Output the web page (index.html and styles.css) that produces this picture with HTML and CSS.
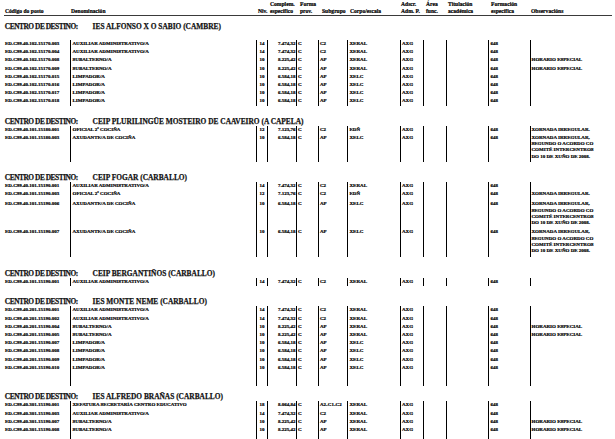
FILE: index.html
```html
<!DOCTYPE html>
<html lang="gl">
<head>
<meta charset="utf-8">
<title>Relación de postos</title>
<link rel="stylesheet" href="styles.css">
</head>
<body>
<div class="page">
  <div class="head">
    <span class="h">Código do posto</span>
    <span class="h">Denominación</span>
    <span class="h">Niv.</span>
    <span class="h">Complem.<br>específico</span>
    <span class="h">Forma<br>prov.</span>
    <span class="h">Subgrupo</span>
    <span class="h">Corpo/escala</span>
    <span class="h">Adscr.<br>Adm. P.</span>
    <span class="h">Área<br>func.</span>
    <span class="h">Titulación<br>académica</span>
    <span class="h">Formación<br>específica</span>
    <span class="h">Observacións</span>
  </div>

  <section class="centro s1">
    <div class="title"><span class="lbl">CENTRO DE DESTINO:</span><span class="name">IES ALFONSO X O SABIO (CAMBRE)</span></div>
    <div class="rows">
      <div class="row"><span class="c cod">ED.C99.40.102.15170.003</span><span class="c den">AUXILIAR ADMINISTRATIVO/A</span><span class="c niv">14</span><span class="c esp">7.474,32</span><span class="c frm">C</span><span class="c sub">C2</span><span class="c cor">XERAL</span><span class="c ads">AXG</span><span class="c are"></span><span class="c tit"></span><span class="c fes">648</span><span class="c obs"></span></div>
      <div class="row"><span class="c cod">ED.C99.40.102.15170.004</span><span class="c den">AUXILIAR ADMINISTRATIVO/A</span><span class="c niv">14</span><span class="c esp">7.474,32</span><span class="c frm">C</span><span class="c sub">C2</span><span class="c cor">XERAL</span><span class="c ads">AXG</span><span class="c are"></span><span class="c tit"></span><span class="c fes">648</span><span class="c obs"></span></div>
      <div class="row"><span class="c cod">ED.C99.40.102.15170.008</span><span class="c den">SUBALTERNO/A</span><span class="c niv">10</span><span class="c esp">8.225,42</span><span class="c frm">C</span><span class="c sub">AP</span><span class="c cor">XERAL</span><span class="c ads">AXG</span><span class="c are"></span><span class="c tit"></span><span class="c fes">648</span><span class="c obs">HORARIO ESPECIAL</span></div>
      <div class="row"><span class="c cod">ED.C99.40.102.15170.009</span><span class="c den">SUBALTERNO/A</span><span class="c niv">10</span><span class="c esp">8.225,42</span><span class="c frm">C</span><span class="c sub">AP</span><span class="c cor">XERAL</span><span class="c ads">AXG</span><span class="c are"></span><span class="c tit"></span><span class="c fes">648</span><span class="c obs">HORARIO ESPECIAL</span></div>
      <div class="row"><span class="c cod">ED.C99.40.102.15170.015</span><span class="c den">LIMPADOR/A</span><span class="c niv">10</span><span class="c esp">6.584,18</span><span class="c frm">C</span><span class="c sub">AP</span><span class="c cor">XELC</span><span class="c ads">AXG</span><span class="c are"></span><span class="c tit"></span><span class="c fes">648</span><span class="c obs"></span></div>
      <div class="row"><span class="c cod">ED.C99.40.102.15170.016</span><span class="c den">LIMPADOR/A</span><span class="c niv">10</span><span class="c esp">6.584,18</span><span class="c frm">C</span><span class="c sub">AP</span><span class="c cor">XELC</span><span class="c ads">AXG</span><span class="c are"></span><span class="c tit"></span><span class="c fes">648</span><span class="c obs"></span></div>
      <div class="row"><span class="c cod">ED.C99.40.102.15170.017</span><span class="c den">LIMPADOR/A</span><span class="c niv">10</span><span class="c esp">6.584,18</span><span class="c frm">C</span><span class="c sub">AP</span><span class="c cor">XELC</span><span class="c ads">AXG</span><span class="c are"></span><span class="c tit"></span><span class="c fes">648</span><span class="c obs"></span></div>
      <div class="row"><span class="c cod">ED.C99.40.102.15170.018</span><span class="c den">LIMPADOR/A</span><span class="c niv">10</span><span class="c esp">6.584,18</span><span class="c frm">C</span><span class="c sub">AP</span><span class="c cor">XELC</span><span class="c ads">AXG</span><span class="c are"></span><span class="c tit"></span><span class="c fes">648</span><span class="c obs"></span></div>
    </div>
  </section>

  <section class="centro s2">
    <div class="title"><span class="lbl">CENTRO DE DESTINO:</span><span class="name">CEIP PLURILINGÜE MOSTEIRO DE CAAVEIRO (A CAPELA)</span></div>
    <div class="rows">
      <div class="row"><span class="c cod">ED.C99.40.101.15180.001</span><span class="c den">OFICIAL 2ª COCIÑA</span><span class="c niv">12</span><span class="c esp">7.123,76</span><span class="c frm">C</span><span class="c sub">C2</span><span class="c cor">EDÑ</span><span class="c ads">AXG</span><span class="c are"></span><span class="c tit"></span><span class="c fes">648</span><span class="c obs">XORNADA IRREGULAR.</span></div>
      <div class="row"><span class="c cod">ED.C99.40.101.15180.003</span><span class="c den">AXUDANTE/A DE COCIÑA</span><span class="c niv">10</span><span class="c esp">6.584,18</span><span class="c frm">C</span><span class="c sub">AP</span><span class="c cor">XELC</span><span class="c ads">AXG</span><span class="c are"></span><span class="c tit"></span><span class="c fes">648</span><span class="c obs multi">XORNADA IRREGULAR,<br>SEGUNDO O ACORDO CO<br>COMITÉ INTERCENTROS<br>DO 10 DE XUÑO DE 2008.</span></div>
    </div>
  </section>

  <section class="centro s3">
    <div class="title"><span class="lbl">CENTRO DE DESTINO:</span><span class="name">CEIP FOGAR (CARBALLO)</span></div>
    <div class="rows">
      <div class="row"><span class="c cod">ED.C99.40.101.15190.001</span><span class="c den">AUXILIAR ADMINISTRATIVO/A</span><span class="c niv">14</span><span class="c esp">7.474,32</span><span class="c frm">C</span><span class="c sub">C2</span><span class="c cor">XERAL</span><span class="c ads">AXG</span><span class="c are"></span><span class="c tit"></span><span class="c fes">648</span><span class="c obs"></span></div>
      <div class="row tall"><span class="c cod">ED.C99.40.101.15190.003</span><span class="c den">OFICIAL 2ª COCIÑA</span><span class="c niv">12</span><span class="c esp">7.123,76</span><span class="c frm">C</span><span class="c sub">C2</span><span class="c cor">EDÑ</span><span class="c ads">AXG</span><span class="c are"></span><span class="c tit"></span><span class="c fes">648</span><span class="c obs">XORNADA IRREGULAR.</span></div>
      <div class="row"><span class="c cod">ED.C99.40.101.15190.006</span><span class="c den">AXUDANTE/A DE COCIÑA</span><span class="c niv">10</span><span class="c esp">6.584,18</span><span class="c frm">C</span><span class="c sub">AP</span><span class="c cor">XELC</span><span class="c ads">AXG</span><span class="c are"></span><span class="c tit"></span><span class="c fes">648</span><span class="c obs multi">XORNADA IRREGULAR,<br>SEGUNDO O ACORDO CO<br>COMITÉ INTERCENTROS<br>DO 10 DE XUÑO DE 2008.</span></div>
      <div class="row"><span class="c cod">ED.C99.40.101.15190.007</span><span class="c den">AXUDANTE/A DE COCIÑA</span><span class="c niv">10</span><span class="c esp">6.584,18</span><span class="c frm">C</span><span class="c sub">AP</span><span class="c cor">XELC</span><span class="c ads">AXG</span><span class="c are"></span><span class="c tit"></span><span class="c fes">648</span><span class="c obs multi">XORNADA IRREGULAR,<br>SEGUNDO O ACORDO CO<br>COMITÉ INTERCENTROS<br>DO 10 DE XUÑO DE 2008.</span></div>
    </div>
  </section>

  <section class="centro s4">
    <div class="title"><span class="lbl">CENTRO DE DESTINO:</span><span class="name">CEIP BERGANTIÑOS (CARBALLO)</span></div>
    <div class="rows">
      <div class="row"><span class="c cod">ED.C99.40.101.15190.001</span><span class="c den">AUXILIAR ADMINISTRATIVO/A</span><span class="c niv">14</span><span class="c esp">7.474,32</span><span class="c frm">C</span><span class="c sub">C2</span><span class="c cor">XERAL</span><span class="c ads">AXG</span><span class="c are"></span><span class="c tit"></span><span class="c fes">648</span><span class="c obs"></span></div>
    </div>
  </section>

  <section class="centro s5">
    <div class="title"><span class="lbl">CENTRO DE DESTINO:</span><span class="name">IES MONTE NEME (CARBALLO)</span></div>
    <div class="rows">
      <div class="row"><span class="c cod">ED.C99.40.201.15190.001</span><span class="c den">AUXILIAR ADMINISTRATIVO/A</span><span class="c niv">14</span><span class="c esp">7.474,32</span><span class="c frm">C</span><span class="c sub">C2</span><span class="c cor">XERAL</span><span class="c ads">AXG</span><span class="c are"></span><span class="c tit"></span><span class="c fes">648</span><span class="c obs"></span></div>
      <div class="row"><span class="c cod">ED.C99.40.201.15190.002</span><span class="c den">AUXILIAR ADMINISTRATIVO/A</span><span class="c niv">14</span><span class="c esp">7.474,32</span><span class="c frm">C</span><span class="c sub">C2</span><span class="c cor">XERAL</span><span class="c ads">AXG</span><span class="c are"></span><span class="c tit"></span><span class="c fes">648</span><span class="c obs"></span></div>
      <div class="row"><span class="c cod">ED.C99.40.201.15190.004</span><span class="c den">SUBALTERNO/A</span><span class="c niv">10</span><span class="c esp">8.225,42</span><span class="c frm">C</span><span class="c sub">AP</span><span class="c cor">XERAL</span><span class="c ads">AXG</span><span class="c are"></span><span class="c tit"></span><span class="c fes">648</span><span class="c obs">HORARIO ESPECIAL</span></div>
      <div class="row"><span class="c cod">ED.C99.40.201.15190.005</span><span class="c den">SUBALTERNO/A</span><span class="c niv">10</span><span class="c esp">8.225,42</span><span class="c frm">C</span><span class="c sub">AP</span><span class="c cor">XERAL</span><span class="c ads">AXG</span><span class="c are"></span><span class="c tit"></span><span class="c fes">648</span><span class="c obs">HORARIO ESPECIAL</span></div>
      <div class="row"><span class="c cod">ED.C99.40.201.15190.007</span><span class="c den">LIMPADOR/A</span><span class="c niv">10</span><span class="c esp">6.584,18</span><span class="c frm">C</span><span class="c sub">AP</span><span class="c cor">XELC</span><span class="c ads">AXG</span><span class="c are"></span><span class="c tit"></span><span class="c fes">648</span><span class="c obs"></span></div>
      <div class="row"><span class="c cod">ED.C99.40.201.15190.008</span><span class="c den">LIMPADOR/A</span><span class="c niv">10</span><span class="c esp">6.584,18</span><span class="c frm">C</span><span class="c sub">AP</span><span class="c cor">XELC</span><span class="c ads">AXG</span><span class="c are"></span><span class="c tit"></span><span class="c fes">648</span><span class="c obs"></span></div>
      <div class="row"><span class="c cod">ED.C99.40.201.15190.009</span><span class="c den">LIMPADOR/A</span><span class="c niv">10</span><span class="c esp">6.584,18</span><span class="c frm">C</span><span class="c sub">AP</span><span class="c cor">XELC</span><span class="c ads">AXG</span><span class="c are"></span><span class="c tit"></span><span class="c fes">648</span><span class="c obs"></span></div>
      <div class="row"><span class="c cod">ED.C99.40.201.15190.010</span><span class="c den">LIMPADOR/A</span><span class="c niv">10</span><span class="c esp">6.584,18</span><span class="c frm">C</span><span class="c sub">AP</span><span class="c cor">XELC</span><span class="c ads">AXG</span><span class="c are"></span><span class="c tit"></span><span class="c fes">648</span><span class="c obs"></span></div>
      <div class="row fill"><span class="c cod"></span><span class="c den"></span><span class="c niv"></span><span class="c esp"></span><span class="c frm"></span><span class="c sub"></span><span class="c cor"></span><span class="c ads"></span><span class="c are"></span><span class="c tit"></span><span class="c fes"></span><span class="c obs"></span></div>
    </div>
  </section>

  <section class="centro s6">
    <div class="title"><span class="lbl">CENTRO DE DESTINO:</span><span class="name">IES ALFREDO BRAÑAS (CARBALLO)</span></div>
    <div class="rows">
      <div class="row"><span class="c cod">ED.C99.40.301.15190.001</span><span class="c den">XEFATURA SECRETARÍA CENTRO EDUCATIVO</span><span class="c niv">18</span><span class="c esp">8.064,84</span><span class="c frm">C</span><span class="c sub">A2-C1-C2</span><span class="c cor">XERAL</span><span class="c ads">AXG</span><span class="c are"></span><span class="c tit"></span><span class="c fes">648</span><span class="c obs"></span></div>
      <div class="row"><span class="c cod">ED.C99.40.301.15190.003</span><span class="c den">AUXILIAR ADMINISTRATIVO/A</span><span class="c niv">14</span><span class="c esp">7.474,32</span><span class="c frm">C</span><span class="c sub">C2</span><span class="c cor">XERAL</span><span class="c ads">AXG</span><span class="c are"></span><span class="c tit"></span><span class="c fes">648</span><span class="c obs"></span></div>
      <div class="row"><span class="c cod">ED.C99.40.301.15190.007</span><span class="c den">SUBALTERNO/A</span><span class="c niv">10</span><span class="c esp">8.225,42</span><span class="c frm">C</span><span class="c sub">AP</span><span class="c cor">XERAL</span><span class="c ads">AXG</span><span class="c are"></span><span class="c tit"></span><span class="c fes">648</span><span class="c obs">HORARIO ESPECIAL</span></div>
      <div class="row"><span class="c cod">ED.C99.40.301.15190.008</span><span class="c den">SUBALTERNO/A</span><span class="c niv">10</span><span class="c esp">8.225,42</span><span class="c frm">C</span><span class="c sub">AP</span><span class="c cor">XERAL</span><span class="c ads">AXG</span><span class="c are"></span><span class="c tit"></span><span class="c fes">648</span><span class="c obs">HORARIO ESPECIAL</span></div>
      <div class="row fill"><span class="c cod"></span><span class="c den"></span><span class="c niv"></span><span class="c esp"></span><span class="c frm"></span><span class="c sub"></span><span class="c cor"></span><span class="c ads"></span><span class="c are"></span><span class="c tit"></span><span class="c fes"></span><span class="c obs"></span></div>
    </div>
  </section>
</div>
</body>
</html>
```

FILE: styles.css
```css
* {
  box-sizing: border-box;
  margin: 0;
  padding: 0;
}

html, body {
  background: #ffffff;
}

body {
  margin: 0;
  font-family: "Liberation Serif", "Times New Roman", serif;
  font-weight: bold;
  color: #000000;
}

.page {
  width: 615px;
  height: 439px;
  overflow: hidden;
  padding-left: 4px;
}

/* ---------- header ---------- */
.head {
  display: grid;
  grid-template-columns: 66px 187px 12px 30px 22px 28px 51px 25px 22px 43px 40px 1fr;
  align-items: end;
  width: 608px;
  height: 16px;
  padding-left: 1px;
  border-bottom: 1px solid #3a3a3a;
  font-size: 5.6px;
  line-height: 7px;
  white-space: nowrap;
  -webkit-text-stroke: 0.2px #000;
}

/* ---------- sections ---------- */
.centro {
  margin-top: 11px;
}

.centro.s1 {
  margin-top: 5.5px;
}

.centro.s1 .title {
  margin-bottom: 9.5px;
}

.centro.s4 {
  margin-top: 12.5px;
}

.centro.s6 {
  margin-top: 6.5px;
}

.title {
  display: flex;
  padding-left: 1px;
  width: 700px;
  height: 9px;
  font-family: "Liberation Serif", "Times New Roman", serif;
  font-size: 8.6px;
  line-height: 9px;
  white-space: nowrap;
  color: #111;
  -webkit-text-stroke: 0.25px #111;
  transform: scaleX(0.86);
  transform-origin: 0 50%;
}

.title .lbl {
  width: 102px;
  letter-spacing: -0.55px;
}

/* ---------- rows ---------- */
.row {
  display: grid;
  grid-template-columns: 66px 186px 11px 29px 22px 29px 53px 23px 23px 42px 42px 82px;
  min-height: 8.2px;
  font-size: 5px;
  line-height: 8.2px;
  white-space: nowrap;
  -webkit-text-stroke: 0.2px #000;
}

.row.tall {
  min-height: 10px;
}

.c {
  border-left: 1px solid #000;
  overflow: visible;
}

.cod {
  border-left: none;
  padding-left: 1px;
}

.den {
  padding-left: 1.5px;
}

.niv {
  text-align: center;
}

.esp {
  text-align: right;
  padding-right: 0.5px;
}

.frm,
.sub,
.ads {
  padding-left: 1px;
}

.cor {
  padding-left: 1.5px;
}

.fes {
  padding-left: 1.5px;
}

.obs {
  padding-left: 0.5px;
}

.obs.multi {
  line-height: 6.3px;
  padding-top: 1px;
  padding-bottom: 2px;
}

.row.fill {
  height: 14px;
}
```
